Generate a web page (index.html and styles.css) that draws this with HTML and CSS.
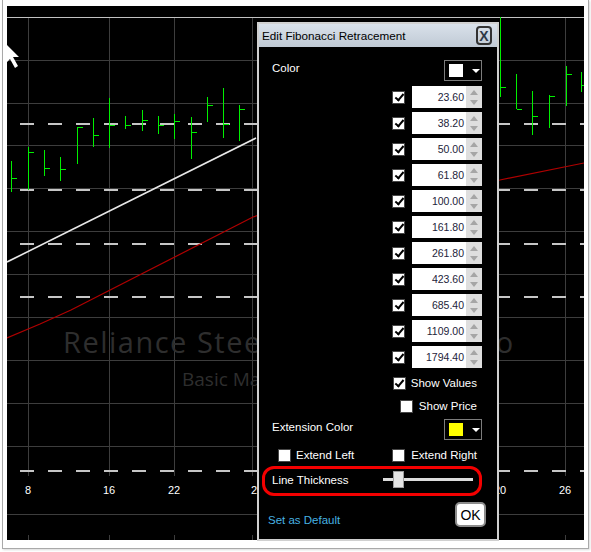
FILE: index.html
```html
<!DOCTYPE html>
<html>
<head>
<meta charset="utf-8">
<link rel="stylesheet" href="styles.css">
</head>
<body>
<div class="window">
  <div class="chart">
    <svg class="plot" width="577" height="534" viewBox="7 6 577 534">
      <g class="grid">
        <path d="M7 60.5H584M7 103.5H584M7 145.5H584M7 188.5H584M7 231.5H584M7 274.5H584M7 317.5H584M7 360.5H584M7 403.5H584M7 446.5H584M7 514.5H584"/>
        <path d="M28.5 17V476M109.5 17V476M174.5 17V476M252.5 17V476M565.5 17V476"/>
        <path d="M28.5 535V540M109.5 535V540M174.5 535V540M252.5 535V540M565.5 535V540"/>
      </g>
      <path class="topline" d="M7 17.5H584"/>
      <g class="dash">
        <path d="M20 124H584M20 190H584M20 244H584M20 297H584M20 471H584"/>
      </g>
      <text class="wm1" x="63" y="353">Reliance Steel &amp;</text>
      <text class="wm1" x="476" y="353">Co</text>
      <text class="wm2" x="182" y="386">Basic Materials</text>
      <path class="trend" d="M7 262L256 138"/>
      <path class="ma" d="M7 338L40 324L71 310L253 217L330 192L420 184L500 180L584 163"/>
      <g class="bars">
        <path d="M11.5 161V192M12 178.5H17"/>
        <path d="M28.5 147V190M29 152.5H34"/>
        <path d="M44.5 150V176M45 168.5H50"/>
        <path d="M60.5 157V181M61 169.5H66"/>
        <path d="M77.5 127V164M78 127.5H83"/>
        <path d="M93.5 118V147M94 135.5H99"/>
        <path d="M109.5 98V148M110 125.5H115"/>
        <path d="M125.5 116V129M126 125.5H131"/>
        <path d="M142.5 110V131M143 120.5H148"/>
        <path d="M158.5 116V134M159 125.5H164"/>
        <path d="M174.5 114V139M175 121.5H180"/>
        <path d="M191.5 117V159M192 132.5H197"/>
        <path d="M207.5 97V122M208 105.5H213"/>
        <path d="M223.5 88V138M224 124.5H229"/>
        <path d="M239.5 105V141M240 109.5H245"/>
        <path d="M500.5 17V97M501 87.5H506"/>
        <path d="M516.5 74V109M517 109.5H522"/>
        <path d="M532.5 91V135M533 116.5H538"/>
        <path d="M549.5 95V128M550 96.5H555"/>
        <path d="M566.5 66V106M567 74.5H572"/>
        <path d="M581.5 72V92M582 85.5H587"/>
      </g>
      <g class="xl">
        <text x="28" y="494">8</text>
        <text x="109" y="494">16</text>
        <text x="174" y="494">22</text>
        <text x="257" y="494">29</text>
        <text x="500" y="494">20</text>
        <text x="565" y="494">26</text>
      </g>
      <path class="cursor" d="M3 41L19 57L13 57L18 66L15 68L10 59L5 64Z"/>
    </svg>

    <div class="dlg">
      <div class="titlebar">
        <span class="title">Edit Fibonacci Retracement</span>
        <span class="close">X</span>
      </div>
      <div class="body">
        <div class="row">
          <span class="lbl">Color</span>
          <div class="dd"><span class="sw sw-white"></span><span class="tri"></span></div>
        </div>
        <div class="levels">
          <div class="lvl"><span class="cb on"></span><div class="spin"><span class="val">23.60</span><span class="arrows"><i class="up"></i><i class="dn"></i></span></div></div>
          <div class="lvl"><span class="cb on"></span><div class="spin"><span class="val">38.20</span><span class="arrows"><i class="up"></i><i class="dn"></i></span></div></div>
          <div class="lvl"><span class="cb on"></span><div class="spin"><span class="val">50.00</span><span class="arrows"><i class="up"></i><i class="dn"></i></span></div></div>
          <div class="lvl"><span class="cb on"></span><div class="spin"><span class="val">61.80</span><span class="arrows"><i class="up"></i><i class="dn"></i></span></div></div>
          <div class="lvl"><span class="cb on"></span><div class="spin"><span class="val">100.00</span><span class="arrows"><i class="up"></i><i class="dn"></i></span></div></div>
          <div class="lvl"><span class="cb on"></span><div class="spin"><span class="val">161.80</span><span class="arrows"><i class="up"></i><i class="dn"></i></span></div></div>
          <div class="lvl"><span class="cb on"></span><div class="spin"><span class="val">261.80</span><span class="arrows"><i class="up"></i><i class="dn"></i></span></div></div>
          <div class="lvl"><span class="cb on"></span><div class="spin"><span class="val">423.60</span><span class="arrows"><i class="up"></i><i class="dn"></i></span></div></div>
          <div class="lvl"><span class="cb on"></span><div class="spin"><span class="val">685.40</span><span class="arrows"><i class="up"></i><i class="dn"></i></span></div></div>
          <div class="lvl"><span class="cb on"></span><div class="spin"><span class="val">1109.00</span><span class="arrows"><i class="up"></i><i class="dn"></i></span></div></div>
          <div class="lvl"><span class="cb on"></span><div class="spin"><span class="val">1794.40</span><span class="arrows"><i class="up"></i><i class="dn"></i></span></div></div>
        </div>
        <div class="opt opt-values"><span class="cb on"></span><span>Show Values</span></div>
        <div class="opt opt-price"><span class="cb"></span><span>Show Price</span></div>
        <div class="row row-ext">
          <span class="lbl">Extension Color</span>
          <div class="dd"><span class="sw sw-yellow"></span><span class="tri"></span></div>
        </div>
        <div class="extend">
          <div class="chk"><span class="cb"></span><span>Extend Left</span></div>
          <div class="chk chk-right"><span class="cb"></span><span>Extend Right</span></div>
        </div>
        <div class="thick">
          <span class="thick-lbl">Line Thickness</span>
          <div class="slider"><span class="thumb"></span></div>
        </div>
        <div class="foot">
          <span class="link">Set as Default</span>
          <span class="ok">OK</span>
        </div>
      </div>
    </div>
  </div>
</div>
</body>
</html>
```

FILE: styles.css
```css
html, body {
  margin: 0;
  padding: 0;
}
body {
  background: #fff;
  width: 591px;
  height: 552px;
  overflow: hidden;
  font-family: "Liberation Sans", Arial, sans-serif;
}
.window {
  width: 587px;
  height: 549px;
  margin-left: 2px;
  border: 1px solid #a9a9a9;
  border-top: 0;
  padding: 6px 4px 0 4px;
  box-sizing: border-box;
  box-shadow: 1px 1px 2px rgba(0,0,0,0.15);
}
.chart {
  position: relative;
  width: 577px;
  height: 534px;
  background: #000;
}
.plot {
  display: block;
}
.grid path {
  stroke: #3d3d3d;
  stroke-width: 1;
  fill: none;
}
.topline {
  stroke: #c2c2c2;
  stroke-width: 1;
}
.dash path {
  stroke: #c6c6c6;
  stroke-width: 2;
  stroke-dasharray: 14 14;
  fill: none;
}
.wm1 {
  font-family: "Open Sans", sans-serif;
  font-size: 29px;
  letter-spacing: 1.5px;
  fill: #2e2e2e;
}
.wm2 {
  font-family: "Open Sans", sans-serif;
  font-size: 19px;
  fill: #2e2e2e;
}
.trend {
  stroke: #e8e8e8;
  stroke-width: 1.6;
  fill: none;
}
.ma {
  stroke: #b00000;
  stroke-width: 1.2;
  fill: none;
}
.bars path {
  stroke: #00f000;
  stroke-width: 1;
  fill: none;
}
.xl text {
  font-family: "Liberation Sans", Arial, sans-serif;
  font-size: 11px;
  fill: #fff;
  text-anchor: middle;
}
.cursor {
  fill: #fff;
}

/* dialog */
.dlg {
  position: absolute;
  left: 250px;
  top: 16px;
  width: 242px;
  height: 519px;
  box-sizing: border-box;
  border: 2px solid #d0d0d0;
  background: #000;
  display: flex;
  flex-direction: column;
}
.titlebar {
  height: 23px;
  flex: none;
  background: linear-gradient(#d9e1ea, #c0cad5);
  display: flex;
  align-items: center;
  justify-content: space-between;
  padding: 0 5px 0 3px;
}
.title {
  font-size: 11.7px;
  color: #000;
}
.close {
  width: 16px;
  height: 19px;
  box-sizing: border-box;
  border: 2px solid #333;
  border-radius: 4px;
  display: flex;
  align-items: center;
  justify-content: center;
  font-size: 14px;
  font-weight: bold;
  color: #2d3846;
  line-height: 1;
}
.body {
  flex: 1;
  padding: 13px 15px 0 13px;
  display: flex;
  flex-direction: column;
  color: #fff;
  font-size: 11.5px;
}
.row {
  display: flex;
  justify-content: space-between;
  align-items: flex-start;
  height: 21px;
}
.lbl {
  line-height: 16px;
}
.row-ext {
  margin-top: 4px;
}
.dd {
  width: 38px;
  height: 21px;
  box-sizing: border-box;
  border: 1px solid #7c7c7c;
  display: flex;
  align-items: center;
  padding-left: 4px;
}
.sw {
  width: 14px;
  height: 13px;
}
.sw-white {
  background: #fff;
}
.sw-yellow {
  background: #ffff00;
}
.tri {
  margin-left: 9px;
  width: 0;
  height: 0;
  border-left: 4px solid transparent;
  border-right: 4px solid transparent;
  border-top: 4px solid #fff;
}
.levels {
  margin-top: 5px;
  display: flex;
  flex-direction: column;
  align-items: flex-end;
  gap: 4px;
}
.lvl {
  display: flex;
  align-items: center;
  gap: 7px;
  height: 22px;
}
.cb {
  width: 13px;
  height: 13px;
  box-sizing: border-box;
  border: 1px solid #474747;
  background: #fff;
  position: relative;
  flex: none;
}
.cb.on::after {
  content: "";
  position: absolute;
  left: 3.5px;
  top: 0.5px;
  width: 3px;
  height: 7px;
  border: solid #000;
  border-width: 0 2px 2px 0;
  transform: rotate(40deg);
}
.spin {
  width: 70px;
  height: 22px;
  display: flex;
  background: #fff;
}
.val {
  flex: 1;
  min-width: 0;
  text-align: right;
  padding-right: 2px;
  font-size: 10.5px;
  line-height: 22px;
  color: #1d1d3a;
  white-space: nowrap;
}
.arrows {
  width: 16px;
  flex: none;
  background: #dedede;
  display: flex;
  flex-direction: column;
  align-items: center;
  justify-content: center;
  gap: 5px;
}
.up, .dn {
  width: 0;
  height: 0;
  border-left: 4px solid transparent;
  border-right: 4px solid transparent;
}
.up {
  border-bottom: 5px solid #a6a6a6;
}
.dn {
  border-top: 5px solid #a6a6a6;
}
.opt {
  display: flex;
  align-items: center;
  gap: 5px;
  height: 18px;
  align-self: flex-end;
  margin-right: 5px;
}
.opt-values {
  margin-top: 6px;
}
.opt-price {
  margin-top: 5px;
  gap: 6px;
}
.extend {
  display: flex;
  justify-content: space-between;
  height: 18px;
  margin-top: 6px;
  padding-left: 6px;
  margin-right: 5px;
}
.chk {
  display: flex;
  align-items: center;
  gap: 5px;
}
.chk-right {
  gap: 6px;
}
.thick {
  margin: 2px 0 0 -10px;
  width: 220px;
  height: 30px;
  box-sizing: border-box;
  border: 3px solid #f40000;
  border-radius: 12px;
  display: flex;
  align-items: center;
  padding: 0 6px 3px 7px;
}
.slider {
  margin-left: auto;
  width: 90px;
  height: 17px;
  display: flex;
  background: linear-gradient(transparent 7px, #dcdcdc 7px, #dcdcdc 10px, transparent 10px);
}
.thumb {
  margin-left: 10px;
  width: 11px;
  height: 17px;
  box-sizing: border-box;
  background: #e4e4e4;
  border: 1px solid #9c9c9c;
}
.foot {
  margin: 6px -4px 0 -4px;
  height: 25px;
  display: flex;
  justify-content: space-between;
  align-items: flex-end;
}
.link {
  color: #47b2e2;
  line-height: 14px;
}
.ok {
  width: 31px;
  height: 25px;
  box-sizing: border-box;
  border: 2px solid #8c8c8c;
  border-radius: 5px;
  background: #fff;
  color: #000;
  font-size: 14px;
  display: flex;
  align-items: center;
  justify-content: center;
}
```
